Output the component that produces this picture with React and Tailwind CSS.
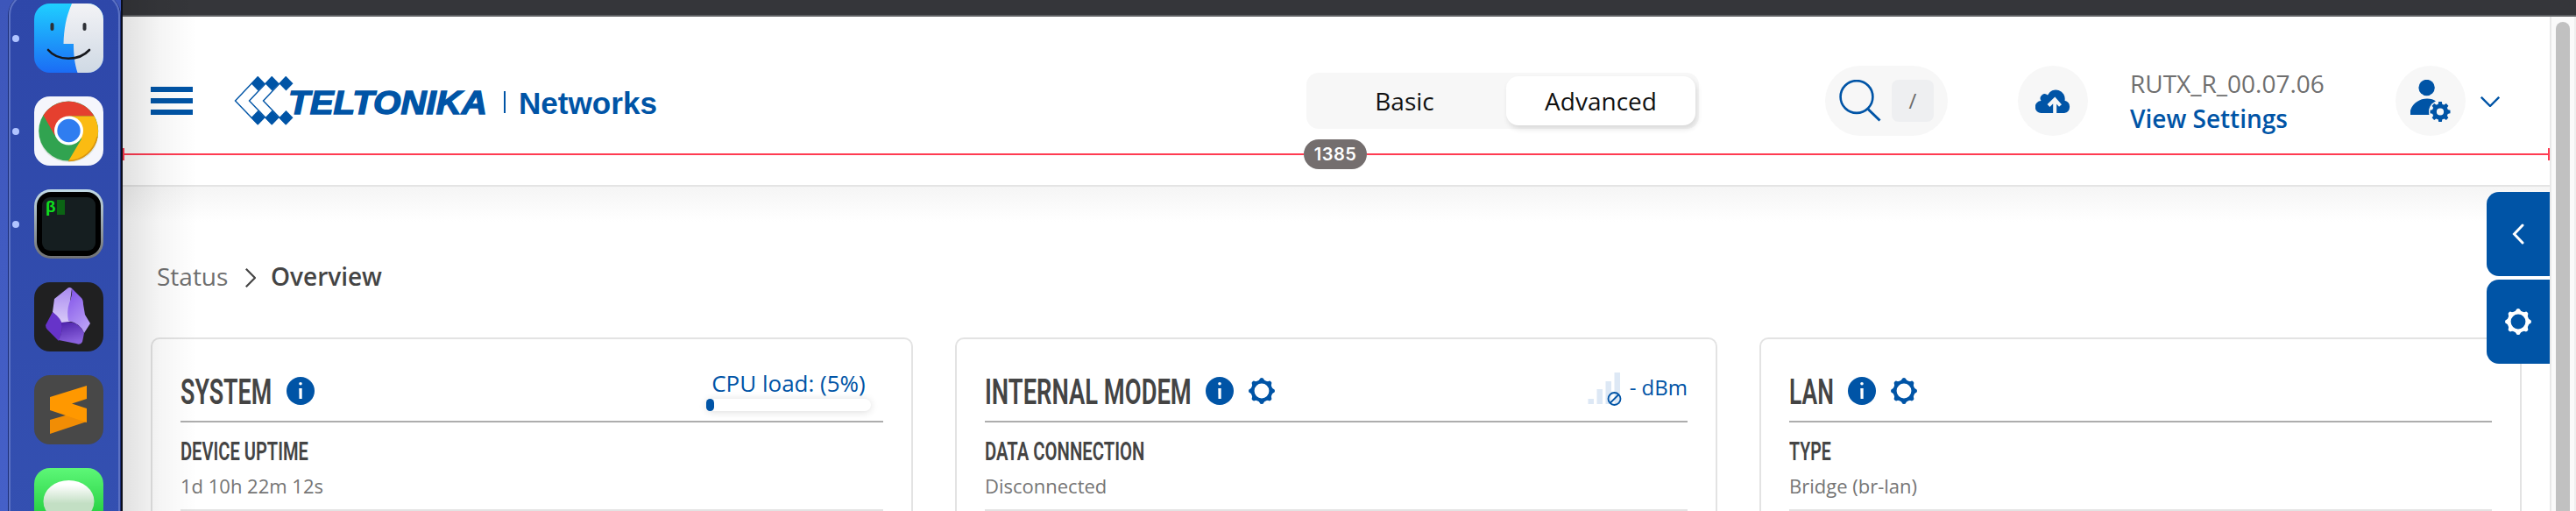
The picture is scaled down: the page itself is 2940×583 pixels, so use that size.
const GEAR_ANGLES = [0, 45, 90, 135, 180, 225, 270, 315];

function GearIcon({ className }) {
  return (
    <svg viewBox="-15 -15 30 30" className={className} fill="none">
      <circle r="10.4" stroke="currentColor" strokeWidth="4" />
      {GEAR_ANGLES.map((angle) => (
        <path
          key={angle}
          d="M-4 -11 L-2.3 -13.4 Q-1.9 -15 0 -15 Q1.9 -15 2.3 -13.4 L4 -11Z"
          fill="currentColor"
          transform={`rotate(${angle})`}
        />
      ))}
    </svg>
  );
}

function InfoIcon() {
  return (
    <svg viewBox="0 0 32 32" className="h-8 w-8 shrink-0">
      <circle cx="16" cy="16" r="16" fill="#0054a6" />
      <circle cx="16" cy="7.7" r="1.8" fill="#fff" />
      <path d="M14.3 13h3.4v12h-3.2z" fill="#fff" />
    </svg>
  );
}

function FinderIcon() {
  return (
    <svg viewBox="0 0 79 79" className="h-[79px] w-[79px] rounded-[18px]">
      <defs>
        <linearGradient id="finderBlue" x1="0" y1="0" x2="0" y2="1">
          <stop offset="0" stopColor="#1fcfff" />
          <stop offset="1" stopColor="#1b6cf5" />
        </linearGradient>
        <linearGradient id="finderGray" x1="0" y1="0" x2="0" y2="1">
          <stop offset="0" stopColor="#f3f3f6" />
          <stop offset="1" stopColor="#cfd9e4" />
        </linearGradient>
      </defs>
      <rect width="79" height="79" fill="url(#finderBlue)" />
      <path d="M43 0C36 16 34 30 33.500 46H45C45 58 46 68 49.500 79H79V0Z" fill="url(#finderGray)" />
      <path d="M20.500 24v5M57.500 24v5" stroke="#2d3036" strokeWidth="4" strokeLinecap="round" />
      <path d="M16 53c11 13 35 13 47 0" stroke="#16181d" strokeWidth="2.600" strokeLinecap="round" fill="none" />
    </svg>
  );
}

function ChromeIcon() {
  return (
    <svg viewBox="0 0 79 79" className="h-[79px] w-[79px] rounded-[18px]">
      <rect width="79" height="79" fill="#f5f6fc" />
      <ellipse cx="39.500" cy="46" rx="33" ry="29" fill="#cfdcd0" opacity=".7" />
      <circle cx="39.200" cy="39.500" r="34" fill="#31a350" />
      <path d="M10.500 21.500A34 34 0 0 1 68.500 22.500H39.500L23.500 44.500Z" fill="#e5402f" />
      <path d="M68.500 22.500A34 34 0 0 1 39.200 73.500L54 48.500L39.500 22.500Z" fill="#fbbb12" />
      <path d="M39.200 73.500A34 34 0 0 0 72 46" stroke="#d99310" strokeWidth="1.500" fill="none" />
      <circle cx="39.500" cy="39" r="16.500" fill="#fff" />
      <circle cx="39.500" cy="39" r="13.200" fill="#2f7df0" />
    </svg>
  );
}

function TerminalIcon() {
  return (
    <div className="h-[79px] w-[79px] rounded-[19px] bg-linear-to-b from-[#c3dbe6] to-[#707173] p-[3px]">
      <div className="h-full w-full rounded-[16px] bg-black p-[6px]">
        <div className="flex h-full w-full items-start gap-[2px] rounded-[9px] bg-[#151e20] pl-1 pt-[3px]">
          <span className="w-[11px] font-['Liberation_Mono',monospace] text-[19px] font-bold leading-[18px] text-[#0fe01e]">β</span>
          <span className="h-[17px] w-[9px] bg-[#0b6414]" />
        </div>
      </div>
    </div>
  );
}

function ObsidianIcon() {
  return (
    <svg viewBox="0 0 79 79" className="h-[79px] w-[79px] rounded-[18px]">
      <defs>
        <linearGradient id="gemLight" x1="0" y1="0" x2="0" y2="1">
          <stop offset="0" stopColor="#a98af0" />
          <stop offset="1" stopColor="#d9cbf8" />
        </linearGradient>
        <linearGradient id="gemRight" x1="0" y1="0" x2="0.500" y2="1">
          <stop offset="0" stopColor="#7f4fe8" />
          <stop offset="1" stopColor="#b79cf5" />
        </linearGradient>
        <linearGradient id="gemDark" x1="0" y1="0" x2="0.300" y2="1">
          <stop offset="0" stopColor="#4a1fa8" />
          <stop offset="1" stopColor="#8a62dd" />
        </linearGradient>
      </defs>
      <rect width="79" height="79" fill="#202021" />
      <path d="M38 7Q40 5 43 7L41 22L44 44L32 47L21 34L23 19Z" fill="url(#gemLight)" />
      <path d="M43 7L54 18Q56 20 56 25L58 37L64 47L57 58Q53 47 39 44Q37 33 40 24Q44 14 43 7Z" fill="url(#gemRight)" />
      <path d="M21 34Q32 42 32 50Q32 58 28 67L15 54Q13 52 13 49Z" fill="#6633c9" />
      <path d="M31 46Q50 42 57 58L55 68Q53 72 48 70L28 66Q33 56 31 46Z" fill="url(#gemDark)" />
    </svg>
  );
}

function SublimeIcon() {
  return (
    <svg viewBox="0 0 79 79" className="h-[79px] w-[79px] rounded-[18px]">
      <rect width="79" height="79" fill="#484848" />
      <path d="M18 51L60 39V53L18 67Z" fill="#f18d05" />
      <path d="M18 25L60 12V27L43 32.500L60 38V54L18 40Z" fill="#ff9800" />
    </svg>
  );
}

function MessagesIcon() {
  return (
    <svg viewBox="0 0 79 79" className="h-[79px] w-[79px] rounded-[18px]">
      <defs>
        <linearGradient id="msgGreen" x1="0" y1="0" x2="0" y2="1">
          <stop offset="0" stopColor="#5df777" />
          <stop offset="1" stopColor="#0cbd2a" />
        </linearGradient>
        <linearGradient id="msgBubble" x1="0" y1="0" x2="0" y2="1">
          <stop offset="0.100" stopColor="#fff" />
          <stop offset="0.550" stopColor="#c3dfc4" />
        </linearGradient>
      </defs>
      <rect width="79" height="79" fill="url(#msgGreen)" />
      <ellipse cx="39.500" cy="38" rx="29" ry="24" fill="url(#msgBubble)" />
    </svg>
  );
}

const dockApps = [
  { Icon: FinderIcon, running: true },
  { Icon: ChromeIcon, running: true },
  { Icon: TerminalIcon, running: true },
  { Icon: ObsidianIcon, running: false },
  { Icon: SublimeIcon, running: false },
  { Icon: MessagesIcon, running: false },
];

function Dock() {
  return (
    <aside className="h-[583px] w-[140px] shrink-0 overflow-hidden border-r-2 border-[#0b0e1c] bg-linear-to-b from-[#3d56ba] to-[#4560c8] pl-[9px]">
      <div className="-mt-2 h-[620px] w-[129px] rounded-t-[26px] border-l border-r border-[#1c2f78]">
        <div className="flex h-full flex-col gap-[27px] rounded-t-[25px] border-2 border-[#5b71c3] bg-linear-to-b from-[#2e47a9] to-[#3450b1] pt-[10px]">
          {dockApps.map(({ Icon, running }, i) => (
            <div key={i} className="flex shrink-0 items-center pl-[2px]">
              <span className={running ? "h-2 w-2 rounded-full bg-[#b0c4ff]" : "h-2 w-2"} />
              <div className="ml-[17px]">
                <Icon />
              </div>
            </div>
          ))}
        </div>
      </div>
    </aside>
  );
}

function Logo() {
  return (
    <svg viewBox="266 85 486 60" className="ml-[46px] h-[60px] w-[486px]" fill="#0054a6">
      {[0, 16, 32].map((dx) => (
        <g key={dx} transform={`translate(${dx} 0)`}>
          <path d="M294.500 87.500L268.500 115L294.500 142" fill="none" stroke="#0054a6" strokeWidth="1.400" />
          <path d="M294.500 87L302.500 95.200L294.500 103.500L286.500 95.200Z" />
          <path d="M294.500 126L302.500 134.300L294.500 142.500L286.500 134.300Z" />
        </g>
      ))}
      <text
        x="329"
        y="129.500"
        textLength="227"
        lengthAdjust="spacingAndGlyphs"
        stroke="#0054a6"
        strokeWidth="1.400"
        className="font-['Liberation_Sans',sans-serif] text-[36px] font-bold italic"
      >
        TELTONIKA
      </text>
      <rect x="575" y="104" width="2" height="25" />
      <text
        x="592"
        y="129.500"
        textLength="158"
        lengthAdjust="spacingAndGlyphs"
        className="font-['Liberation_Sans',sans-serif] text-[35px] font-bold"
      >
        Networks
      </text>
    </svg>
  );
}

function Header() {
  return (
    <header className="flex h-[194px] items-center border-b-2 border-[#e4e4e4] bg-white pl-8">
      <button className="flex h-8 w-12 flex-col justify-between">
        <span className="h-1.5 w-12 bg-[#0054a6]" />
        <span className="h-1.5 w-12 bg-[#0054a6]" />
        <span className="h-1.5 w-12 bg-[#0054a6]" />
      </button>
      <Logo />

      {/* Mode toggle */}
      <div className="ml-[739px] flex h-16 w-[448px] shrink-0 items-center gap-2 rounded-[14px] bg-[#f7f7f7] px-1 text-[28px] text-[#111]">
        <button className="h-14 w-[216px]">Basic</button>
        <button className="h-14 w-[216px] rounded-[14px] bg-white shadow-[2px_4px_6px_rgba(0,0,0,0.12)]">Advanced</button>
      </div>

      {/* Search */}
      <div className="ml-36 flex h-20 w-[140px] shrink-0 items-center gap-3 rounded-full bg-[#f7f7f7] pl-4">
        <svg viewBox="0 0 48 48" className="h-12 w-12" fill="none" stroke="#0054a6">
          <circle cx="20" cy="19.500" r="18.400" strokeWidth="2.600" />
          <path d="M33 33.500L46.500 46.500" strokeWidth="3" />
        </svg>
        <span className="flex h-12 w-12 items-center justify-center rounded-lg bg-[#eeeff1] text-[24px] text-[#6b6b6b]">/</span>
      </div>

      {/* Firmware */}
      <div className="ml-20 flex h-20 w-20 shrink-0 items-center justify-center rounded-full bg-[#f7f7f7]">
        <svg viewBox="0 0 40 27" className="h-[27px] w-10" fill="#0054a6">
          <path d="M7 27A7 7 0 0 1 6.500 13A5 5 0 0 1 14 6.500A10.300 10.300 0 0 1 33.500 12.700A7.300 7.300 0 0 1 33 27Z" />
          <path d="M22.200 27V14M15 18.500L22.200 11.500L28.500 18.500" fill="none" stroke="#f7f7f7" strokeWidth="4" />
        </svg>
      </div>
      <div className="ml-12 w-[303px] shrink-0 whitespace-nowrap text-[28px] leading-10">
        <p className="text-[#6f6f6f]">RUTX_R_00.07.06</p>
        <p className="font-semibold text-[#0054a6]">View Settings</p>
      </div>

      {/* User */}
      <div className="flex h-20 w-20 shrink-0 items-center justify-center rounded-full bg-[#f7f7f7]">
        <svg viewBox="0 0 48 48" className="h-12 w-12" fill="#0054a6">
          <circle cx="19.600" cy="9" r="9.200" />
          <path d="M1 40V35C4 26 12 21.500 20 21.500C24 21.500 28 22.500 30 24.500L24 31L23 40Z" />
          <circle cx="35" cy="36.500" r="13" fill="#f7f7f7" />
          <circle cx="35" cy="36.500" r="6.600" fill="none" stroke="#0054a6" strokeWidth="5" />
          {GEAR_ANGLES.map((angle) => (
            <path key={angle} d="M-2.500 -8L-1.800 -11.500H1.800L2.500 -8Z" transform={`translate(35 36.500) rotate(${angle})`} />
          ))}
        </svg>
      </div>
      <svg viewBox="0 0 22 12" className="ml-[17px] mt-0.5 h-3 w-[22px] shrink-0" fill="none" stroke="#0054a6" strokeWidth="2.400">
        <path d="M0.800 0.800L11 11L21.200 0.800" />
      </svg>
    </header>
  );
}

function CpuLoad() {
  return (
    <div className="mr-3.5 w-[188px]">
      <p className="text-center text-[26px] leading-9 text-[#0054a6]">CPU load: (5%)</p>
      <div className="h-3.5 w-full rounded-full bg-white shadow-[0_1px_10px_rgba(0,0,0,0.14)]">
        <div className="h-3.5 w-[9px] rounded-full bg-[#0054a6]" />
      </div>
    </div>
  );
}

function SignalStrength() {
  return (
    <div className="flex items-center gap-2 text-[24px] text-[#0054a6]">
      <svg viewBox="0 0 40 38" className="h-[38px] w-10">
        <path d="M0.500 30h6.500v6H0.500zM10.500 19h6.500v17h-6.500zM20.500 10h6.500v26h-6.500zM30.500 0h6.500v36h-6.500z" fill="#dde8f5" />
        <g stroke="#0054a6" strokeWidth="1.800" fill="none">
          <circle cx="30.500" cy="30" r="7" />
          <path d="M25.500 35L35.500 25" />
        </g>
      </svg>
      <span className="pb-1">- dBm</span>
    </div>
  );
}

const cards = [
  {
    title: "SYSTEM",
    titleClass: "w-[103px]",
    titleScale: "scale-x-[0.655]",
    label: "DEVICE UPTIME",
    labelScale: "scale-x-[0.67]",
    value: "1d 10h 22m 12s",
    extra: <CpuLoad />,
  },
  {
    title: "INTERNAL MODEM",
    titleClass: "w-[234px]",
    titleScale: "scale-x-[0.667]",
    gear: true,
    label: "DATA CONNECTION",
    labelScale: "scale-x-[0.676]",
    value: "Disconnected",
    extra: <SignalStrength />,
  },
  {
    title: "LAN",
    titleClass: "w-[49px]",
    titleScale: "scale-x-[0.645]",
    gear: true,
    label: "TYPE",
    labelScale: "scale-x-[0.65]",
    value: "Bridge (br-lan)",
  },
];

function Card({ title, titleClass, titleScale, gear, label, labelScale, value, extra }) {
  return (
    <section className="h-[240px] w-[870px] shrink-0 rounded-[10px] border-2 border-[#e3e3e3] px-8">
      <div className="flex h-[95px] items-end justify-between border-b-2 border-[#adadad]">
        <div className="flex h-[68px] items-center">
          <h2 className={`${titleClass} whitespace-nowrap pt-[3px] font-['Roboto',sans-serif] text-[41px] font-semibold text-[#444]`}>
            <span className={`inline-block origin-left ${titleScale}`}>{title}</span>
          </h2>
          <div className="ml-[18px] flex items-center gap-[17px] text-[#0054a6]">
            <InfoIcon />
            {gear && <GearIcon className="h-[30px] w-[30px]" />}
          </div>
        </div>
        <div className="flex h-[83px] items-center pt-[10px]">{extra}</div>
      </div>
      <div className="h-[101px] border-b-2 border-[#e3e3e3] pt-[13px]">
        <h3 className="whitespace-nowrap font-['Roboto',sans-serif] text-[30px] font-semibold leading-10 text-[#444]">
          <span className={`inline-block origin-left ${labelScale}`}>{label}</span>
        </h3>
        <p className="pt-px text-[22px] leading-9 text-[#757575]">{value}</p>
      </div>
    </section>
  );
}

// Width marker drawn across the viewport
function Ruler() {
  return (
    <div className="absolute left-0 top-[159px] flex h-[34px] w-[2770px] items-center">
      <span className="h-3.5 w-0.5 bg-[#ff3b52]" />
      <span className="h-0.5 w-[1346px] bg-[#ff3b52]" />
      <span className="flex h-[34px] w-[72px] items-center justify-center rounded-full bg-[#746e6e] font-['Inter',sans-serif] text-[20px] font-semibold tracking-[0.5px] text-white">
        1385
      </span>
      <span className="h-0.5 flex-1 bg-[#ff3b52]" />
      <span className="h-3.5 w-0.5 bg-[#ff3b52]" />
    </div>
  );
}

export default function App() {
  return (
    <div className="flex h-[583px] w-[2940px] overflow-hidden bg-white font-['Open_Sans','Noto_Sans',sans-serif]">
      <Dock />
      <main className="relative h-[583px] w-[2800px] shrink-0 overflow-hidden">
        <div className="h-[19px] border-b-2 border-[#5d5f62] bg-[#35363a]" />
        <div className="flex">
          <div className="h-[564px] w-[2770px] shrink-0">
            <Header />
            <div className="h-[370px] bg-linear-to-b from-[#f5f5f5] to-white to-[40px] pl-8">
              <nav className="flex h-[172px] items-center pl-[7px] pt-[35px] text-[28px] text-[#6f6f6f]">
                <span className="w-[101px] pb-[3px]">Status</span>
                <svg viewBox="0 0 12 22" className="h-[22px] w-3" fill="none" stroke="#444" strokeWidth="2.200">
                  <path d="M0.800 0.800L11 11L0.800 21.200" />
                </svg>
                <span className="ml-[17px] pb-[3px] font-semibold text-[#444]">Overview</span>
              </nav>
              <div className="flex gap-12">
                {cards.map((card) => (
                  <Card key={card.title} {...card} />
                ))}
              </div>
            </div>
          </div>
          {/* Scrollbar */}
          <div className="flex h-[564px] w-7 shrink-0 justify-center border-l-2 border-[#e8e8e8] bg-[#fafafa] pt-1.5">
            <div className="h-[600px] w-4 rounded-full bg-[#c1c1c1]" />
          </div>
          <div className="w-0.5 bg-[#efefef]" />
        </div>

        <Ruler />

        {/* Side tabs */}
        <div className="absolute left-[2698px] top-[219px] flex w-[72px] flex-col gap-1">
          <button className="flex h-24 items-center justify-center rounded-l-[14px] bg-[#0054a6]">
            <svg viewBox="0 0 14 24" className="h-6 w-3.5" fill="none" stroke="#fff" strokeWidth="3" strokeLinecap="round">
              <path d="M12 2L2.500 12L12 22" />
            </svg>
          </button>
          <button className="flex h-24 items-center justify-center rounded-l-[14px] bg-[#0054a6] text-white">
            <GearIcon className="h-[30px] w-[30px]" />
          </button>
        </div>

        {/* Shade cast by the dock */}
        <div className="pointer-events-none absolute left-0 top-0 h-full w-[85px] bg-linear-to-r from-black/12 via-black/4 to-transparent" />
      </main>
    </div>
  );
}
